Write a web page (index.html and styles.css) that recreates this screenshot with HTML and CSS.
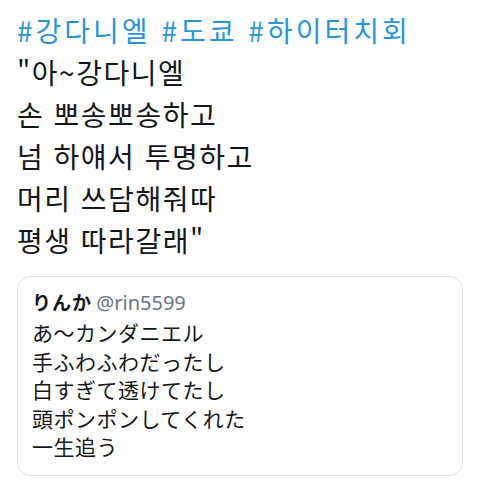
FILE: index.html
```html
<!DOCTYPE html>
<html lang="ko">
<head>
    <meta charset="UTF-8">
    <meta name="viewport" content="width=device-width, initial-scale=1.0">
    <title>트윗</title>
    <link rel="stylesheet" href="styles.css">
</head>
<body>
    <div class="tweet">
        <p class="tweet-text">
            <span class="hashtags"><a href="#">#강다니엘</a> <a href="#">#도쿄</a> <a href="#">#하이터치회</a></span><br>
            "아~강다니엘<br>
            손 뽀송뽀송하고<br>
            넘 하얘서 투명하고<br>
            머리 쓰담해줘따<br>
            평생 따라갈래"
        </p>

        <div class="quote" lang="ja">
            <div class="quote-header">
                <span class="quote-name">りんか</span>
                <span class="quote-handle">@rin5599</span>
            </div>
            <p class="quote-text">
                あ～カンダニエル<br>
                手ふわふわだったし<br>
                白すぎて透けてたし<br>
                頭ポンポンしてくれた<br>
                一生追う
            </p>
        </div>
    </div>
</body>
</html>
```

FILE: styles.css
```css
body {
    margin: 0;
    padding: 0;
    background-color: #fff;
    color: #14171a;
    font-family: "Noto Sans CJK KR", "Noto Sans", sans-serif;
}

.tweet {
    padding: 9px 17px 10px 17px;
}

.tweet-text {
    margin: 0;
    font-size: 28px;
    line-height: 42px;
    letter-spacing: 1.5px;
}

.hashtags {
    letter-spacing: 3px;
}

.hashtags a {
    color: #2a94d8;
    text-decoration: none;
}

.quote {
    margin-top: 15px;
    border: 1px solid #e1e4e6;
    border-radius: 14px;
    padding: 10px 14px 14px 14px;
    font-family: "Noto Sans CJK JP", "Noto Sans", sans-serif;
}

.quote-header {
    font-size: 19px;
    line-height: 30px;
}

.quote-name {
    font-weight: bold;
    letter-spacing: 1px;
}

.quote-handle {
    color: #687684;
    font-family: "Noto Sans", sans-serif;
    font-size: 20px;
}

.quote-text {
    margin: 0;
    font-size: 21px;
    line-height: 28.5px;
    letter-spacing: 0.5px;
}
```
